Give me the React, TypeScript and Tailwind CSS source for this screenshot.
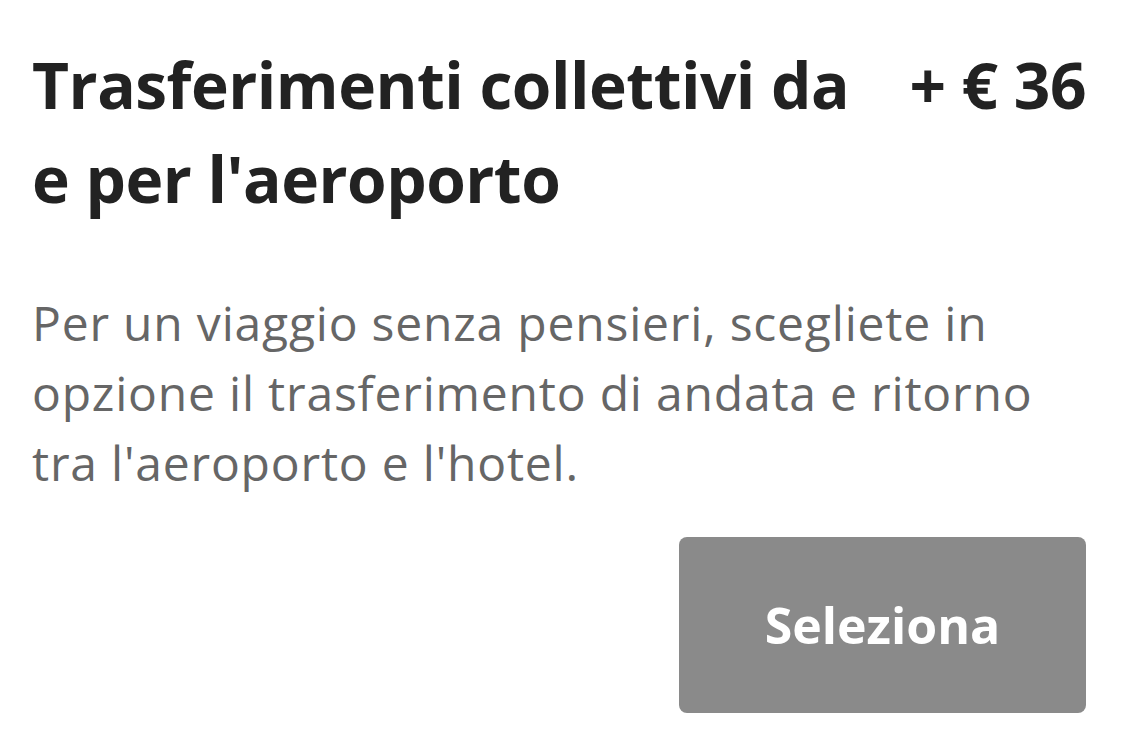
export default function App() {
  return (
    <div className="min-h-[738px] w-full bg-white font-['Open_Sans','Lato',sans-serif] [font-variant-ligatures:none]">
      <article className="flex flex-col pl-[32px] pr-[40px] pt-[38px]">
        <header className="flex items-start justify-between gap-[40px]">
          <h2 className="flex-1 text-[64px] font-bold leading-[94px] tracking-[-0.5px] text-[#222222]">
            Trasferimenti collettivi da e per l'aeroporto
          </h2>
          <span className="whitespace-nowrap text-[64px] font-bold leading-[94px] tracking-[-0.5px] text-[#222222]">
            + € 36
          </span>
        </header>

        <p className="mt-[62px] text-[48px] leading-[70px] tracking-[0.8px] text-[#666666]">
          Per un viaggio senza pensieri, scegliete in opzione il trasferimento di andata e ritorno
          tra l'aeroporto e l'hotel.
        </p>

        <div className="mt-[39px] flex justify-end">
          <button className="h-[176px] w-[407px] rounded-[8px] bg-[#8a8a8a] text-[50px] font-bold text-white">
            Seleziona
          </button>
        </div>
      </article>
    </div>
  );
}
